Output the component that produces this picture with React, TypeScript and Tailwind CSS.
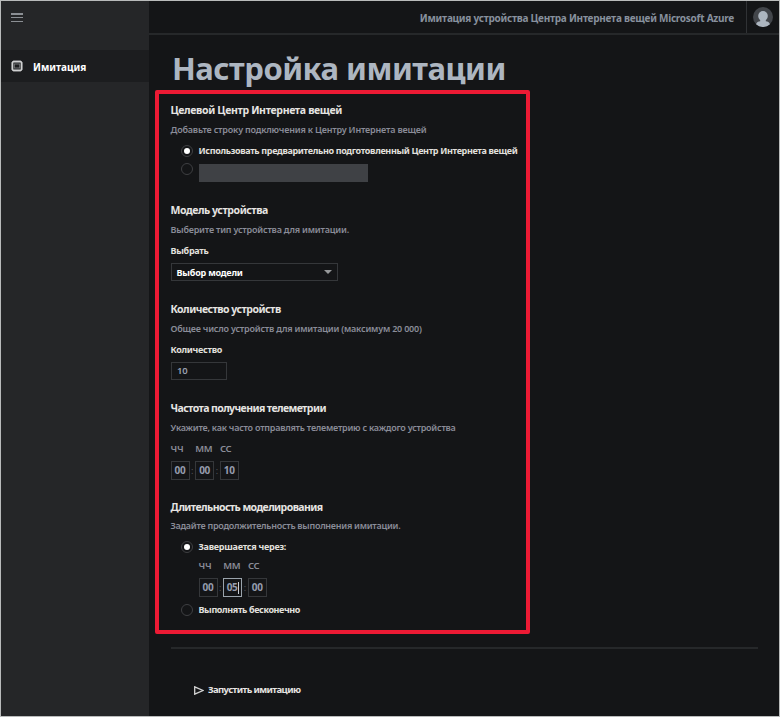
import type { ReactNode } from "react";

function Section({ title, hint, titleClass, hintClass, className, children }: {
  title: string; hint: string; titleClass: string; hintClass: string; className: string; children: ReactNode;
}) {
  return (
    <section className={"flex flex-col items-start whitespace-nowrap " + className}>
      <h2 className={"h-[18px] text-[10.5px] leading-[18px] font-bold text-[#e6e4e2] " + titleClass}>{title}</h2>
      <p className={"h-4 text-[9px] leading-4 font-semibold text-[#8a8c98] " + hintClass}>{hint}</p>
      {children}
    </section>
  );
}

function Radio({ checked }: { checked?: boolean }) {
  return (
    <span className="flex size-3 shrink-0 items-center justify-center rounded-full border border-[#3e3f42]">
      {checked && <span className="size-1.5 rounded-full bg-white" />}
    </span>
  );
}

function TimeBox({ value, active }: { value: string; active?: boolean }) {
  return (
    <span className={"flex h-[19px] w-[19px] items-center justify-center border text-[10px] font-bold tracking-[-0.3px] text-[#959cad] " + (active ? "border-[#9aa3ab]" : "border-[#35373a]")}>
      {value}
      {active && <span className="h-3 w-px bg-[#c9ced6]" />}
    </span>
  );
}

function Colon() {
  return <span className="w-[5.6px] text-center text-[9px] text-[#55575c]">:</span>;
}

function TimeInput({ values, active, className }: { values: string[]; active?: number; className: string }) {
  return (
    <div className={className}>
      <div className="flex h-4 text-[9.5px] leading-4 font-semibold tracking-[-0.2px] text-[#8a8c98]">
        <span className="w-[24.7px]">ЧЧ</span>
        <span className="w-[24.7px]">ММ</span>
        <span>СС</span>
      </div>
      <div className="mt-1 flex items-center">
        <TimeBox value={values[0]} active={active === 0} />
        <Colon />
        <TimeBox value={values[1]} active={active === 1} />
        <Colon />
        <TimeBox value={values[2]} active={active === 2} />
      </div>
    </div>
  );
}

function ChipIcon() {
  return (
    <svg className="h-3 w-3" viewBox="0 0 12 12" fill="none">
      <path d="M3 0.3v11.4M5 0.3v11.4M7 0.3v11.4M9 0.3v11.4M0 3h12M0 5h12M0 7h12M0 9h12" stroke="#a9abad" strokeWidth="0.9" />
      <rect x="1.5" y="1.6" width="9" height="8.8" rx="1.2" fill="#222426" stroke="#cfd0d1" strokeWidth="1.6" />
      <rect x="3.3" y="4" width="5.4" height="4" fill="#1c1d1f" stroke="#77797b" strokeWidth="0.9" />
    </svg>
  );
}

export default function App() {
  return (
    <div className="flex h-[717px] w-[780px] overflow-hidden border border-[#b9bbbb] bg-[#141517] font-['Noto_Sans','Open_Sans',sans-serif]">
      <aside className="w-[148px] shrink-0 bg-[#252628]">
        <div className="flex h-[49px] pt-3 pl-[10px]">
          <div className="flex h-[9px] w-3 flex-col justify-between">
            <span className="h-[1.5px] bg-[#8b8f94]" />
            <span className="h-[1.5px] bg-[#8b8f94]" />
            <span className="h-[1.5px] bg-[#8b8f94]" />
          </div>
        </div>
        <div className="flex h-8 items-center bg-[#1c1d1f] pl-[10px]">
          <ChipIcon />
          <span className="ml-[10px] pt-[2px] text-[10px] font-bold text-white">Имитация</span>
        </div>
      </aside>

      <div className="flex min-w-0 flex-1 flex-col">
        <header className="flex h-[34px] shrink-0 items-stretch justify-end border-b-2 border-[#26282a]">
          <span className="mr-3 whitespace-nowrap pt-px text-[10px] leading-[32px] font-bold tracking-[-0.25px] text-[#87909d]">
            Имитация устройства Центра Интернета вещей Microsoft Azure
          </span>
          <div className="flex w-[33px] items-center justify-center border-l border-[#303235]">
            <svg className="size-5" viewBox="0 0 20 20">
              <circle cx="10" cy="10" r="10" fill="#43464b" />
              <ellipse cx="10" cy="9" rx="4.8" ry="5" fill="#adb6c0" />
              <path d="M7.2 12h5.6v2.3c2 .3 3.5 1 4.2 3A10 10 0 0 1 10 20a10 10 0 0 1-7-2.7c.7-2 2.2-2.7 4.2-3z" fill="#adb6c0" />
            </svg>
          </div>
        </header>

        <main className="flex flex-col">
          <h1 className="ml-[23px] h-[55px] whitespace-nowrap pt-[10px] text-[31px] leading-[46px] font-bold tracking-[-0.5px] text-[#adb6c1]">
            Настройка имитации
          </h1>

          <div className="ml-[6px] h-[544px] w-[375px] rounded-[2px] border-4 border-[#ec1a34] pt-[7px] pl-[11.5px]">
            <Section title="Целевой Центр Интернета вещей" hint="Добавьте строку подключения к Центру Интернета вещей" titleClass="mb-[3px] tracking-[-0.34px]" hintClass="tracking-[-0.18px]" className="h-[100px]">
              <div className="mt-[5px] ml-[10px] flex h-4 items-center text-[9px] font-bold tracking-[-0.34px] text-[#e2e0de]">
                <Radio checked />
                <span className="ml-1.5">Использовать предварительно подготовленный Центр Интернета вещей</span>
              </div>
              <div className="mt-[4px] ml-[10px] flex items-start">
                <Radio />
                <span className="mt-px ml-[6.5px] h-[18px] w-[169px] bg-[#3f4145]" />
              </div>
            </Section>

            <Section title="Модель устройства" hint="Выберите тип устройства для имитации." titleClass="mb-[3px] tracking-[-0.43px]" hintClass="tracking-[-0.2px]" className="h-[99px]">
              <span className="mt-[5px] h-4 text-[9px] leading-4 font-bold tracking-[-0.28px] text-[#e2e0de]">Выбрать</span>
              <div className="mt-[4px] flex h-[18px] w-[167.5px] items-center justify-between border border-[#35373a] pr-[5px] pl-[5px] text-[9px] font-bold tracking-[-0.2px] text-white">
                <span className="pt-px">Выбор модели</span>
                <svg className="h-1 w-2" viewBox="0 0 8 4"><path d="M0 0h8L4 4z" fill="#96989a" /></svg>
              </div>
            </Section>

            <Section title="Количество устройств" hint="Общее число устройств для имитации (максимум 20 000)" titleClass="mb-[3px] tracking-[-0.5px]" hintClass="tracking-[-0.2px]" className="h-[99px]">
              <span className="mt-[5px] h-4 text-[9px] leading-4 font-bold tracking-[-0.3px] text-[#e2e0de]">Количество</span>
              <div className="mt-[4px] flex h-[18px] w-[56px] items-center border border-[#35373a] pl-[5.5px] text-[9.5px] font-semibold tracking-[-0.2px] text-[#9aa0b0]">10</div>
            </Section>

            <Section title="Частота получения телеметрии" hint="Укажите, как часто отправлять телеметрию с каждого устройства" titleClass="mb-[3px] tracking-[-0.59px]" hintClass="tracking-[-0.23px]" className="h-[99px]">
              <TimeInput values={["00", "00", "10"]} className="mt-[5px]" />
            </Section>

            <Section title="Длительность моделирования" hint="Задайте продолжительность выполнения имитации." titleClass="mb-[2px] tracking-[-0.57px]" hintClass="tracking-[-0.26px]" className="">
              <div className="mt-[5px] ml-[10px] flex h-4 items-center text-[9px] font-bold tracking-[-0.25px] text-[#e2e0de]">
                <Radio checked />
                <span className="ml-1.5">Завершается через:</span>
              </div>
              <TimeInput values={["00", "05", "00"]} active={1} className="mt-[3px] ml-[28px]" />
              <div className="mt-[5px] ml-[10px] flex h-4 items-center text-[9px] font-bold tracking-[-0.38px] text-[#e2e0de]">
                <Radio />
                <span className="ml-1.5">Выполнять бесконечно</span>
              </div>
            </Section>
          </div>

          <div className="mt-[13px] ml-[22px] h-[2px] w-[587px] bg-[#26282a]" />

          <button className="mt-[31px] ml-[45px] flex h-5 items-center self-start whitespace-nowrap text-[9.5px] font-bold tracking-[-0.62px] text-[#e6e3e1]">
            <svg className="mr-1 h-[9px] w-[10px]" viewBox="0 0 10 9"><path d="M0.7 0.8v7.4L9 4.5z" fill="none" stroke="#d4d4d4" strokeWidth="1.3" /></svg>
            Запустить имитацию
          </button>
        </main>
      </div>
    </div>
  );
}
